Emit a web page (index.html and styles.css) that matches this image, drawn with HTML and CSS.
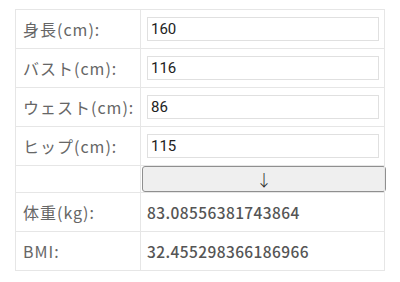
FILE: index.html
```html
<!DOCTYPE html>
<html lang="ja">
<head>
<meta charset="utf-8">
<link rel="stylesheet" href="styles.css">
</head>
<body>
<table class="calc">
  <tr>
    <th class="label">身長(cm):</th>
    <td class="field"><input class="num" type="text" value="160"></td>
  </tr>
  <tr>
    <th class="label">バスト(cm):</th>
    <td class="field"><input class="num" type="text" value="116"></td>
  </tr>
  <tr>
    <th class="label">ウェスト(cm):</th>
    <td class="field"><input class="num" type="text" value="86"></td>
  </tr>
  <tr>
    <th class="label">ヒップ(cm):</th>
    <td class="field"><input class="num" type="text" value="115"></td>
  </tr>
  <tr class="btn-row">
    <th class="label"></th>
    <td class="btn-cell"><button class="calc-btn" type="button">↓</button></td>
  </tr>
  <tr>
    <th class="label">体重(kg):</th>
    <td class="result">83.08556381743864</td>
  </tr>
  <tr>
    <th class="label">BMI:</th>
    <td class="result">32.455298366186966</td>
  </tr>
</table>
</body>
</html>
```

FILE: styles.css
```css
html, body {
  margin: 0;
  padding: 0;
  background: #fff;
}
body {
  padding: 9px 15px;
  font-family: "Noto Sans CJK JP", "Noto Sans", sans-serif;
}
.calc {
  border-collapse: collapse;
  width: 370px;
  table-layout: fixed;
}
.calc th, .calc td {
  border: 1px solid #e6e6e6;
}
.label {
  width: 117px;
  height: 38px;
  padding: 0 0 0 7px;
  text-align: left;
  font-weight: normal;
  font-size: 16px;
  letter-spacing: 1px;
  color: #666;
  white-space: nowrap;
}
.field {
  padding: 0 6px;
}
.num {
  display: block;
  box-sizing: border-box;
  width: 232px;
  height: 24px;
  margin: 0;
  padding: 0 3px;
  border: 1px solid #e0e0e0;
  font-family: Roboto, "Noto Sans", sans-serif;
  font-size: 15px;
  color: #222;
  background: #fff;
}
.btn-row .label {
  height: 26px;
}
.btn-cell {
  padding: 0 0 0 1px;
}
.calc-btn {
  display: block;
  box-sizing: border-box;
  width: 244px;
  height: 26px;
  margin: 0;
  border: 1px solid #8f8f8f;
  border-radius: 3px;
  background: #efefef;
  font-family: "Noto Sans CJK JP", sans-serif;
  font-weight: 300;
  font-size: 16px;
  line-height: 24px;
  color: #222;
  padding: 0;
}
.result {
  padding: 0 0 0 6px;
  font-family: "Noto Sans CJK JP", sans-serif;
  font-weight: 500;
  font-size: 15.5px;
  letter-spacing: 0.4px;
  color: #555;
}
```
